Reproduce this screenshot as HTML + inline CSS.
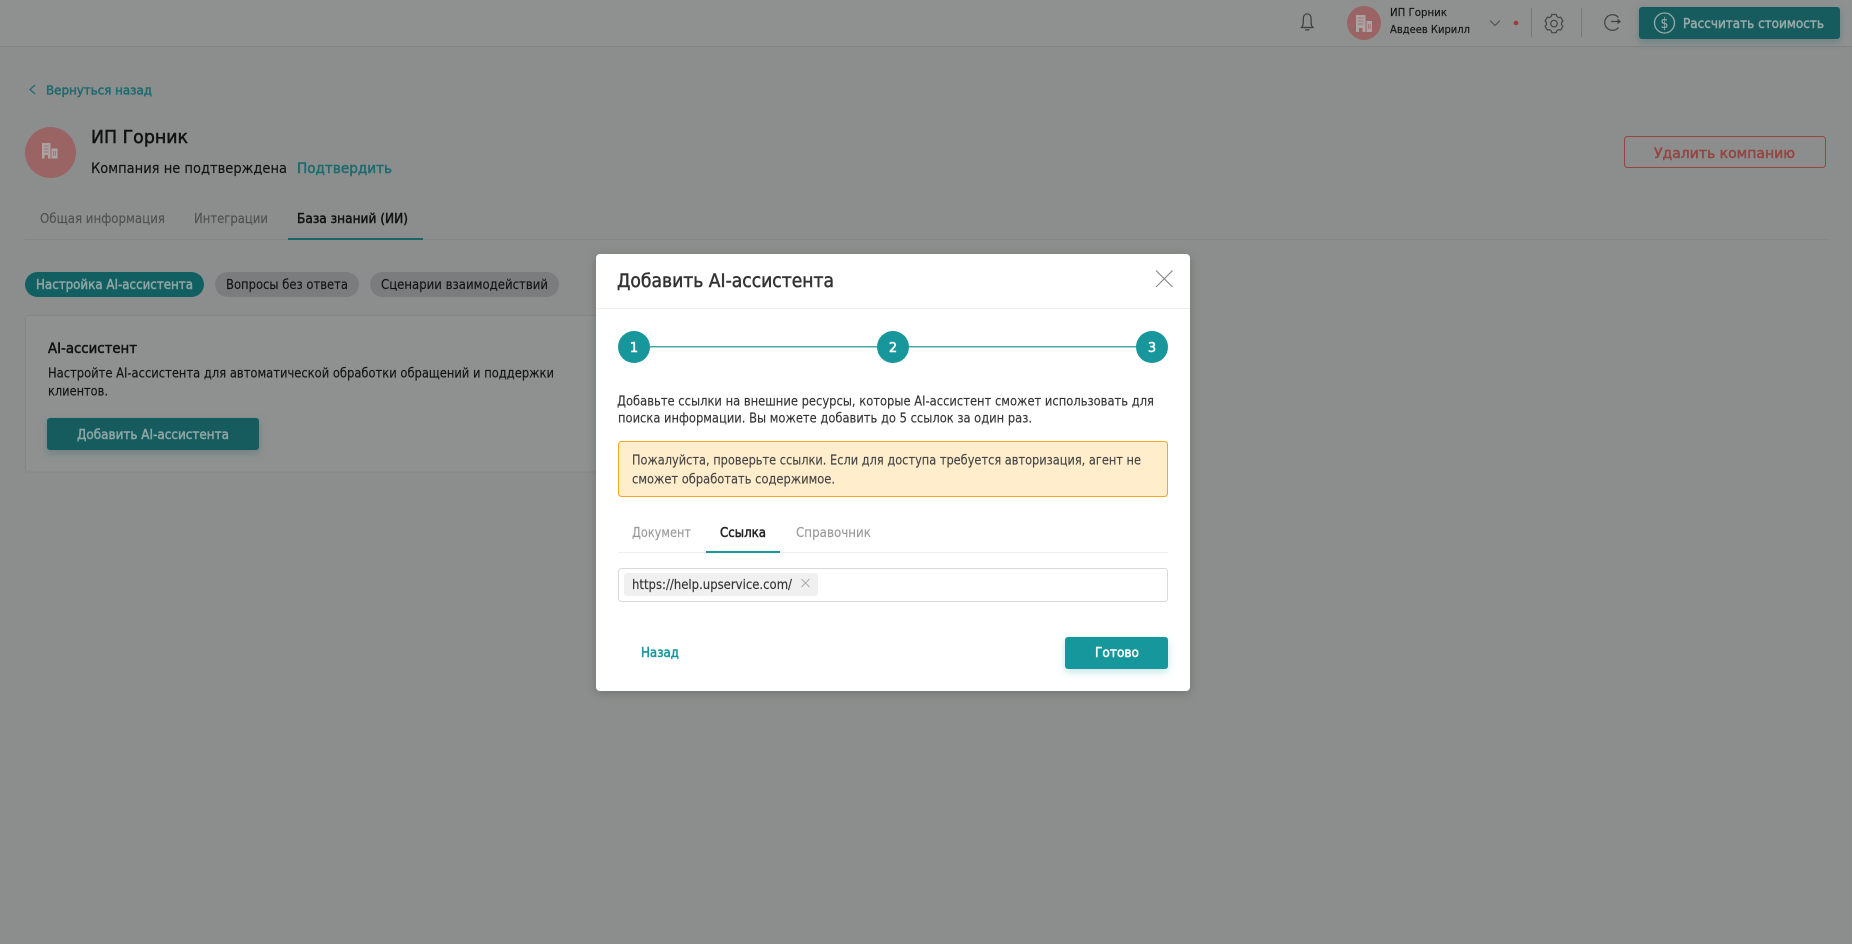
<!DOCTYPE html>
<html lang="ru">
<head>
<meta charset="utf-8">
<title>Добавить AI-ассистента</title>
<style>
html,body{margin:0;padding:0;width:1852px;height:944px;overflow:hidden;background:#8c8e8d}
svg{display:block;position:absolute;left:0;top:0}
text{font-family:"DejaVu Sans","Liberation Sans",sans-serif;font-size:13px;color:#111313;fill:currentColor;stroke:currentColor;stroke-width:.14px;white-space:pre}
.b{stroke-width:.5px}
</style>
</head>
<body>
<svg width="1852" height="944" viewBox="0 0 1852 944" xmlns="http://www.w3.org/2000/svg">
<defs>
<filter id="ms" x="-10%" y="-10%" width="120%" height="120%"><feDropShadow dx="0" dy="2" stdDeviation="5" flood-color="#000" flood-opacity=".2"/></filter>
<filter id="bs" x="-15%" y="-30%" width="130%" height="170%"><feDropShadow dx="0" dy="3" stdDeviation="4" flood-color="#125b5f" flood-opacity=".3"/></filter>
<filter id="gs" x="-15%" y="-30%" width="130%" height="170%"><feDropShadow dx="0" dy="3" stdDeviation="4" flood-color="#17979c" flood-opacity=".25"/></filter>
</defs>
<rect width="1852" height="944" fill="#8c8e8d"/>
<!-- top bar -->
<rect width="1852" height="46" fill="#8f9190"/>
<rect y="46" width="1852" height="1" fill="#828483"/>
<g fill="none" stroke="#3d3f3f" stroke-width="1.200">
<path d="M1301.500 27.500c1.500-1.500 1.800-3 1.800-5.500v-3.500c0-2.800 1.700-4.700 3.900-4.700s3.900 1.900 3.900 4.700v3.500c0 2.500.3 4 1.800 5.500z"/>
<path d="M1305 29.800h4.500"/>
</g>
<circle cx="1364" cy="23" r="17" fill="#9a6464"/>
<path d="M1356 32v-17h9.500v17h-3v-4h-3.500v4z" fill="#aba3a3"/>
<path d="M1366.500 21h5.500v11h-5.500z" fill="#aba3a3"/>
<path d="M1358 18h5.500M1358 21h5.500M1358 24h5.500M1368.300 24v5M1370.200 24v5" stroke="#9a6464" stroke-width=".7" fill="none"/>
<text x="1390" y="16" style="font-size:10.500px" textLength="57" lengthAdjust="spacingAndGlyphs">ИП Горник</text>
<text x="1390" y="33" style="font-size:10.500px" textLength="80" lengthAdjust="spacingAndGlyphs">Авдеев Кирилл</text>
<path d="M1490 20.500l5 5 5-5" fill="none" stroke="#4d4f4f" stroke-width="1"/>
<circle cx="1516" cy="23" r="2.300" fill="#9c3b3b"/>
<rect x="1531" y="8" width="1" height="29" fill="#787a79"/>
<g fill="none" stroke="#444646" stroke-width="1.200">
<path d="M1551.800 14.500h4.400l.7 2.100 1.700 1 2.100-.4 2.200 3.800-1.400 1.600v2l1.400 1.600-2.200 3.800-2.100-.4-1.700 1-.7 2.100h-4.400l-.7-2.100-1.700-1-2.100.4-2.200-3.800 1.400-1.600v-2l-1.400-1.600 2.200-3.800 2.100.4 1.700-1z"/>
<circle cx="1554" cy="23.600" r="3.300"/>
</g>
<rect x="1581" y="8" width="1" height="29" fill="#787a79"/>
<g fill="none" stroke="#3f4141" stroke-width="1.200">
<path d="M1618.500 17.500a7.800 7.800 0 1 0 0 10"/>
<path d="M1611 21.500h8.500"/>
</g>
<path d="M1617.500 18.800l3.500 2.700-3.500 2.700z" fill="#3f4141"/>
<rect x="1639" y="7" width="201" height="32" rx="3" fill="#125b5f" filter="url(#bs)"/>
<circle cx="1664.500" cy="23" r="10" fill="none" stroke="#98a9a8" stroke-width="1.300"/>
<text x="1660.500" y="28" style="font-size:14px;color:#98a9a8" textLength="8" lengthAdjust="spacingAndGlyphs">$</text>
<text class="b" x="1683" y="28" style="color:#98a9a8" textLength="141" lengthAdjust="spacingAndGlyphs">Рассчитать стоимость</text>
<!-- page header -->
<path d="M35 85l-5 4.500 5 4.500" fill="none" stroke="#1d6b6f" stroke-width="1.200"/>
<text class="b" x="46" y="94.500" style="font-size:12.500px;color:#1d6b6f" textLength="106" lengthAdjust="spacingAndGlyphs">Вернуться назад</text>
<circle cx="50.500" cy="152.500" r="25.500" fill="#9a6464"/>
<path d="M42 158.500v-15.500h8.500v15.500h-2.500v-3.500h-3.500v3.500z" fill="#aba3a3"/>
<path d="M51.500 148.500h6v10h-6z" fill="#aba3a3"/>
<path d="M44 146h4.500M44 149h4.500M44 152h4.500M53.500 151v5M55.500 151v5" stroke="#9a6464" stroke-width=".7" fill="none"/>
<text class="b" x="91" y="143" style="font-size:17.500px" textLength="97" lengthAdjust="spacingAndGlyphs">ИП Горник</text>
<text x="91" y="173" style="font-size:14px" textLength="196" lengthAdjust="spacingAndGlyphs">Компания не подтверждена</text>
<text class="b" x="297" y="173" style="font-size:14px;color:#1d6b6f" textLength="95" lengthAdjust="spacingAndGlyphs">Подтвердить</text>
<rect x="1624.500" y="136.500" width="201" height="31" rx="3" fill="none" stroke="#954544" stroke-width="1"/>
<text class="b" x="1654" y="158" style="font-size:14px;color:#954544" textLength="141" lengthAdjust="spacingAndGlyphs">Удалить компанию</text>
<!-- tabs -->
<text x="40" y="223" style="color:#4f5150" textLength="125" lengthAdjust="spacingAndGlyphs">Общая информация</text>
<text x="194" y="223" style="color:#4f5150" textLength="74" lengthAdjust="spacingAndGlyphs">Интеграции</text>
<text class="b" x="297" y="223" textLength="111" lengthAdjust="spacingAndGlyphs">База знаний (ИИ)</text>
<rect x="25" y="239" width="1805" height="1" fill="#858786"/>
<rect x="288" y="238" width="135" height="2" fill="#1a6467"/>
<!-- pills -->
<rect x="25" y="272" width="179" height="25" rx="12.500" fill="#125f62"/>
<text class="b" x="36" y="289" style="color:#90a5a4" textLength="157" lengthAdjust="spacingAndGlyphs">Настройка AI-ассистента</text>
<rect x="215" y="272" width="144" height="25" rx="12.500" fill="#7b7c7e"/>
<text x="226" y="289" textLength="122" lengthAdjust="spacingAndGlyphs">Вопросы без ответа</text>
<rect x="370" y="272" width="189" height="25" rx="12.500" fill="#7b7c7e"/>
<text x="381" y="289" textLength="167" lengthAdjust="spacingAndGlyphs">Сценарии взаимодействий</text>
<!-- card -->
<rect x="25.500" y="315.500" width="1000" height="156.500" rx="3" fill="#8f9190" stroke="#858786"/>
<text class="b" x="48" y="353" style="font-size:14px" textLength="89" lengthAdjust="spacingAndGlyphs">AI-ассистент</text>
<text x="48" y="377.500" textLength="506" lengthAdjust="spacingAndGlyphs">Настройте AI-ассистента для автоматической обработки обращений и поддержки</text>
<text x="48" y="395.500" textLength="60" lengthAdjust="spacingAndGlyphs">клиентов.</text>
<rect x="47" y="418" width="212" height="32" rx="3" fill="#125b5f" filter="url(#bs)"/>
<text class="b" x="77" y="439" style="color:#8fa5a4" textLength="152" lengthAdjust="spacingAndGlyphs">Добавить AI-ассистента</text>
<!-- modal -->
<rect x="596" y="254" width="594" height="437" rx="4" fill="#fff" filter="url(#ms)"/>
<text class="b" x="617" y="287" style="font-size:18.500px;color:#333" textLength="217" lengthAdjust="spacingAndGlyphs">Добавить AI-ассистента</text>
<path d="M1156 270.500l16.500 16.500M1172.500 270.500l-16.500 16.500" fill="none" stroke="#8a8a8a" stroke-width="1.200"/>
<rect x="596" y="308" width="594" height="1" fill="#eeeeee"/>
<rect x="650" y="346" width="488" height="1.500" fill="#48a7aa"/>
<circle cx="634" cy="347" r="16" fill="#17979c"/>
<circle cx="893" cy="347" r="16" fill="#17979c"/>
<circle cx="1152" cy="347" r="16" fill="#17979c"/>
<text class="b" x="634" y="352" text-anchor="middle" style="color:#fff;font-size:13px">1</text>
<text class="b" x="893" y="352" text-anchor="middle" style="color:#fff;font-size:13px">2</text>
<text class="b" x="1152" y="352" text-anchor="middle" style="color:#fff;font-size:13px">3</text>
<text x="617" y="405.500" style="color:#333" textLength="537" lengthAdjust="spacingAndGlyphs">Добавьте ссылки на внешние ресурсы, которые AI-ассистент сможет использовать для</text>
<text x="618" y="422.500" style="color:#333" textLength="414" lengthAdjust="spacingAndGlyphs">поиска информации. Вы можете добавить до 5 ссылок за один раз.</text>
<rect x="618.500" y="441.500" width="549" height="55" rx="3" fill="#ffedcc" stroke="#f5a623"/>
<text x="632" y="464.500" style="color:#444" textLength="509" lengthAdjust="spacingAndGlyphs">Пожалуйста, проверьте ссылки. Если для доступа требуется авторизация, агент не</text>
<text x="632" y="483.500" style="color:#444" textLength="203" lengthAdjust="spacingAndGlyphs">сможет обработать содержимое.</text>
<text x="632" y="537" style="color:#999" textLength="59" lengthAdjust="spacingAndGlyphs">Документ</text>
<text class="b" x="720" y="537" style="color:#222" textLength="46" lengthAdjust="spacingAndGlyphs">Ссылка</text>
<text x="796" y="537" style="color:#999" textLength="75" lengthAdjust="spacingAndGlyphs">Справочник</text>
<rect x="618" y="552" width="550" height="1" fill="#eeeeee"/>
<rect x="706" y="551" width="74" height="2" fill="#17979c"/>
<rect x="618.500" y="568.500" width="549" height="33" rx="3" fill="#fff" stroke="#d9d9d9"/>
<rect x="624" y="573" width="194" height="23" rx="3" fill="#f0f0f0"/>
<text x="632" y="589" style="color:#333" textLength="160" lengthAdjust="spacingAndGlyphs">https://help.upservice.com/</text>
<path d="M801.500 579l8 8M809.500 579l-8 8" fill="none" stroke="#aaa" stroke-width="1"/>
<text class="b" x="641" y="657" style="color:#17979c" textLength="38" lengthAdjust="spacingAndGlyphs">Назад</text>
<rect x="1065" y="637" width="103" height="32" rx="3" fill="#17979c" filter="url(#gs)"/>
<text class="b" x="1095" y="657" style="color:#fff" textLength="44" lengthAdjust="spacingAndGlyphs">Готово</text>
</svg>
</body>
</html>
